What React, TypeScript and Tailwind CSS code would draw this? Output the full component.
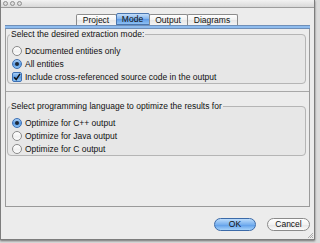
import React from "react";

const font = { fontFamily: '"Liberation Sans", Arial, sans-serif' };

function Radio({ checked }: { checked?: boolean }) {
  if (checked) {
    return (
      <span className="w-[10px] h-[10px] rounded-full border border-[#3b6fb4] bg-[linear-gradient(180deg,#a9d0f7_0%,#5b9be4_55%,#8cc3f5_100%)] flex items-center justify-center shrink-0">
        <span className="w-[4px] h-[4px] rounded-full bg-[#1d2a3a]" />
      </span>
    );
  }
  return (
    <span className="w-[10px] h-[10px] rounded-full border border-[#8a8a8a] bg-[linear-gradient(180deg,#ffffff_0%,#f0f0f0_60%,#ffffff_100%)] shrink-0" />
  );
}

function Check() {
  return (
    <span className="w-[10px] h-[10px] rounded-[2px] border border-[#3b6fb4] bg-[linear-gradient(180deg,#a9d0f7_0%,#5b9be4_55%,#8cc3f5_100%)] flex items-center justify-center shrink-0">
      <svg width="8" height="8" viewBox="0 0 8 8">
        <path d="M1.2 4.2 L3.2 6.6 L7 0.8" fill="none" stroke="#111" strokeWidth="1.5" />
      </svg>
    </span>
  );
}

function Row({ children, control }: { children: React.ReactNode; control: React.ReactNode }) {
  return (
    <div className="flex items-center h-[13px] gap-[3px] pl-[4px]">
      {control}
      <span className="text-[8.5px] leading-none text-[#111]">{children}</span>
    </div>
  );
}

function Tab({ label, active, w }: { label: string; active?: boolean; w: string }) {
  return (
    <div
      className={
        (active
          ? "h-[12px] flex items-center justify-center border border-[#4a76b0] rounded-t-[2px] bg-[linear-gradient(180deg,#c4def9_0%,#7fb2ee_50%,#5d9ae6_51%,#8ec0f2_100%)] text-[8.5px] text-[#111] -ml-px "
          : "h-[11px] mt-[1px] flex items-center justify-center border border-[#8c8c8c] border-b-0 rounded-t-[2px] bg-[linear-gradient(180deg,#ffffff_0%,#f1f1f1_50%,#e6e6e6_51%,#f3f3f3_100%)] text-[8.5px] text-[#111] -ml-px ") + w
      }
    >
      {label}
    </div>
  );
}

export default function App() {
  return (
    <div className="w-[320px] h-[243px] bg-[#dcdcdc] overflow-hidden" style={font}>
      <div className="w-[315px] h-[240px] flex flex-col bg-[#ececec] border-l border-r border-b border-[#7d7d7d] shadow-[0_1px_2px_rgba(0,0,0,0.5)]">
        {/* title bar */}
        <div className="h-[8px] flex items-center gap-[2px] pl-[2px] border-b border-[#9c9c9c] bg-[linear-gradient(180deg,#f2f2f2,#d9d9d9)]">
          <span className="w-[5px] h-[5px] rounded-full border border-[#8f8f8f] bg-[#dedede]" />
          <span className="w-[5px] h-[5px] rounded-full border border-[#8f8f8f] bg-[#dedede]" />
          <span className="w-[5px] h-[5px] rounded-full border border-[#8f8f8f] bg-[#dedede]" />
        </div>
        <div className="flex-1 flex flex-col px-[4px]">
          {/* tabs */}
          <div className="mt-[5px] flex justify-center items-end h-[12px] pr-[1px]">
            <Tab label="Project" w="w-[41px]" />
            <Tab label="Mode" active w="w-[34px]" />
            <Tab label="Output" w="w-[39px]" />
            <Tab label="Diagrams" w="w-[51px]" />
          </div>
          {/* panel */}
          <div className="h-[182px] flex flex-col border-l border-r border-b border-[#9a9a9a]">
            <div className="h-[4px] -mx-px border-t border-b border-[#6f8fb8] bg-[#8fbcee]" />
            <div className="pl-[1px] pr-[3px] flex flex-col">
              <fieldset className="border border-[#b5b5b5] rounded-[4px] h-[54px] bg-[#e7e7e7] mt-[1px]">
                <legend className="text-[8.5px] text-[#111] ml-[2px] px-[1px] leading-none">Select the desired extraction mode:</legend>
                <div className="flex flex-col mt-[6px]">
                  <Row control={<Radio />}>Documented entities only</Row>
                  <Row control={<Radio checked />}>All entities</Row>
                  <Row control={<Check />}>Include cross-referenced source code in the output</Row>
                </div>
              </fieldset>
            </div>
            <div className="mt-[7px] border-t border-[#a8a8a8]" />
            <div className="pl-[1px] pr-[3px] flex flex-col mt-[10px]">
              <fieldset className="border border-[#b5b5b5] rounded-[4px] h-[54px] bg-[#e7e7e7]">
                <legend className="text-[8.5px] text-[#111] ml-[2px] px-[1px] leading-none">Select programming language to optimize the results for</legend>
                <div className="flex flex-col mt-[6px]">
                  <Row control={<Radio checked />}>Optimize for C++ output</Row>
                  <Row control={<Radio />}>Optimize for Java output</Row>
                  <Row control={<Radio />}>Optimize for C output</Row>
                </div>
              </fieldset>
            </div>
          </div>
          {/* buttons */}
          <div className="flex justify-end gap-[11px] mt-[11px] pr-[0px]">
            <button className="w-[42px] h-[13px] rounded-full border border-[#3b6aa8] bg-[linear-gradient(180deg,#bcdcfb_0%,#78b0ef_50%,#5a9be8_51%,#a6d2fa_100%)] text-[8.5px] leading-none text-[#111] flex items-center justify-center">
              OK
            </button>
            <button className="w-[43px] h-[13px] rounded-full border border-[#8a8a8a] bg-[linear-gradient(180deg,#ffffff_0%,#f3f3f3_50%,#e5e5e5_51%,#fbfbfb_100%)] text-[8.5px] leading-none text-[#111] flex items-center justify-center">
              Cancel
            </button>
          </div>
          <div className="flex justify-end mt-auto mb-[1px] -mr-[3px]">
            <svg width="6" height="6" viewBox="0 0 6 6">
              <path d="M6 1 L1 6 M6 3 L3 6 M6 5 L5 6" stroke="#9a9a9a" strokeWidth="0.8" />
            </svg>
          </div>
        </div>
      </div>
    </div>
  );
}
